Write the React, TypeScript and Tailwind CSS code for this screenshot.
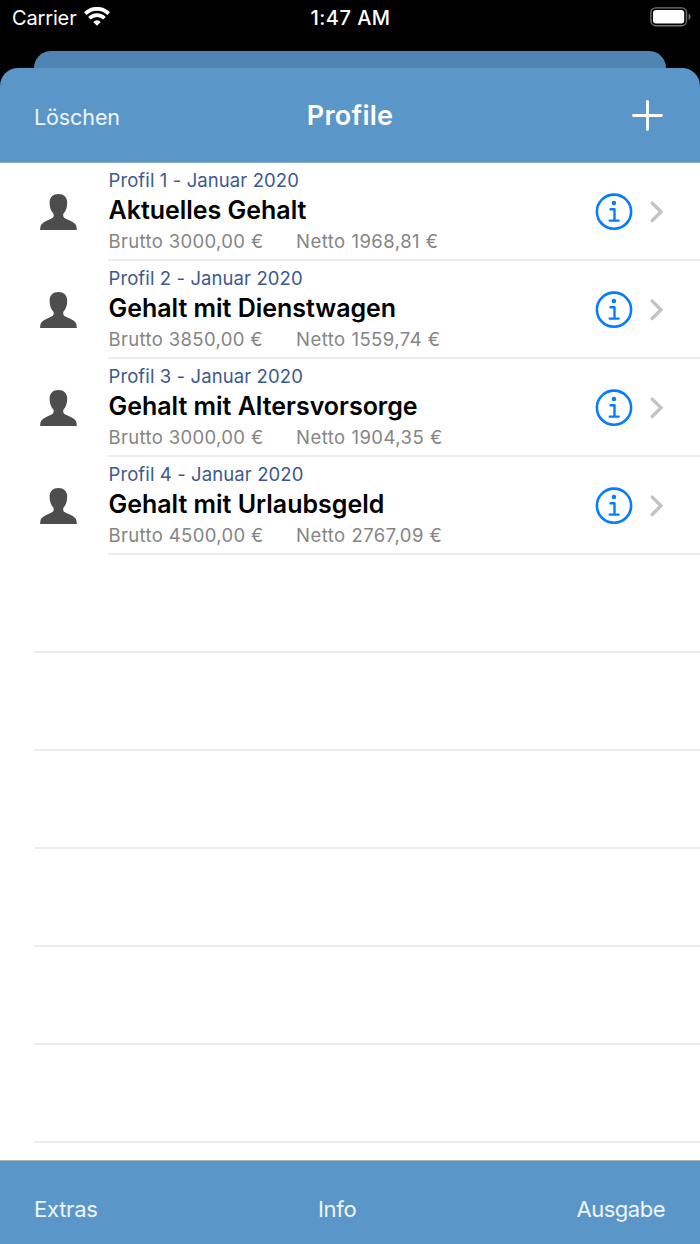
const profiles = [
  { id: 1, date: "Januar 2020", name: "Aktuelles Gehalt", gross: "3000,00 €", net: "1968,81 €" },
  { id: 2, date: "Januar 2020", name: "Gehalt mit Dienstwagen", gross: "3850,00 €", net: "1559,74 €" },
  { id: 3, date: "Januar 2020", name: "Gehalt mit Altersvorsorge", gross: "3000,00 €", net: "1904,35 €" },
  { id: 4, date: "Januar 2020", name: "Gehalt mit Urlaubsgeld", gross: "4500,00 €", net: "2767,09 €" },
];

function WifiIcon() {
  return (
    <svg width="26" height="19" viewBox="0 0 26 19" fill="none" stroke="white">
      <path d="M1.3 6.6a16.6 16.6 0 0 1 23.4 0" strokeWidth="3.8" />
      <path d="M5.5 11.2a10.6 10.6 0 0 1 15 0" strokeWidth="3.6" />
      <path d="M13 18.8l-3.8-3.9a5.4 5.4 0 0 1 7.6 0z" fill="white" stroke="none" />
    </svg>
  );
}

function BatteryIcon() {
  return (
    <svg width="42" height="20" viewBox="0 0 42 20" fill="none">
      <rect x="0.9" y="0.9" width="35.6" height="17.8" rx="4.8" stroke="#747474" strokeWidth="1.4" />
      <rect x="3" y="3" width="31.2" height="13.6" rx="3" fill="white" />
      <path d="M38.6 6.6v6.4c2.6-1 2.6-5.4 0-6.4z" fill="#747474" />
    </svg>
  );
}

function PersonIcon() {
  return (
    <svg width="38" height="38" viewBox="0 0 38 38" fill="#4d4d4d">
      <path d="M19.4 1c5.3 0 8.8 3.3 8.8 8.8 0 4.700-1.300 8.400-3.600 10.800-.7.8-.5 3.300.5 4.100 2.100 1.600 5.500 2.500 8.500 4.200 3.200 1.800 4.200 3.600 4.200 8.100H1.200c0-4.500 1-6.300 4.200-8.100 3-1.700 6.300-2.600 8.400-4.200 1-.8 1.200-3.300.5-4.100-2.300-2.400-3.700-6.100-3.700-10.800C10.600 4.300 14.100 1 19.400 1z" />
    </svg>
  );
}

function InfoIcon() {
  return (
    <svg width="38" height="38" viewBox="0 0 38 38" fill="none" stroke="#087cff">
      <circle cx="19" cy="18.7" r="17.1" strokeWidth="2.6" />
      <circle cx="18.9" cy="10" r="2.3" fill="#087cff" stroke="none" />
      <path d="M15.5 16.2h4v11.3M14.7 27.6h8.9" strokeWidth="2.4" strokeLinecap="round" strokeLinejoin="round" />
    </svg>
  );
}

function Chevron() {
  return (
    <svg width="14" height="22" viewBox="0 0 14 22" fill="none" stroke="#c3c3c5" strokeWidth="3.4">
      <path d="M2.2 2.1L11 10.8l-8.8 8.7" strokeLinecap="round" />
    </svg>
  );
}

function ProfileRow({ profile }: { profile: (typeof profiles)[number] }) {
  return (
    <li className="flex h-[98px] pl-[39px]">
      <div className="w-[69px] shrink-0 pt-[29.5px]">
        <PersonIcon />
      </div>
      <div className="flex flex-1 border-b-2 border-[#ececed]">
        <div className="flex-1 whitespace-nowrap pl-[0.5px] pt-1">
          <p className="text-[18.5px] leading-[26px] tracking-[0.1px] text-[#3d5890]">
            Profil {profile.id} - {profile.date}
          </p>
          <p className="pt-px text-[25px] font-semibold leading-8 tracking-[-0.02px] text-black">{profile.name}</p>
          <div className="-mt-px flex text-[18.5px] leading-8 text-[#858585]">
            <span className="w-[187.5px] tracking-[0.35px]">Brutto {profile.gross}</span>
            <span className="tracking-[0.48px]">Netto {profile.net}</span>
          </div>
        </div>
        <button className="mt-[30px] h-[38px]">
          <InfoIcon />
        </button>
        <div className="ml-[17px] mr-[36px] mt-[38px]">
          <Chevron />
        </div>
      </div>
    </li>
  );
}

export default function App() {
  return (
    <div className="flex h-[1244px] w-[700px] flex-col overflow-hidden bg-black font-['Inter',sans-serif]">
      {/* Status bar */}
      <div className="grid h-[51px] shrink-0 grid-cols-3 text-[20px] leading-9 text-white">
        <div className="flex pl-3">
          <span className="w-[72px] tracking-[-0.15px]">Carrier</span>
          <span className="pt-[7px]">
            <WifiIcon />
          </span>
        </div>
        <span className="pl-px text-center font-medium tracking-[0.5px]">1:47 AM</span>
        <div className="flex justify-end pr-2 pt-[7px]">
          <BatteryIcon />
        </div>
      </div>

      {/* Edge of the sheet behind */}
      <div className="mx-[34px] h-[17px] shrink-0 rounded-t-[17px] bg-[#5085b3]" />

      <header className="grid h-[95px] shrink-0 grid-cols-3 rounded-t-[18px] border-b border-[#89a9c5] bg-[#5b96c8] text-white">
        <button className="mt-[33px] h-8 pl-[34px] text-left text-[21.5px] leading-8 tracking-[-0.1px] text-white/90">
          Löschen
        </button>
        <h1 className="mt-[32px] text-center text-[27px] font-semibold leading-8 tracking-[0.25px]">Profile</h1>
        <button className="mr-[37px] mt-[32px] h-[30px] justify-self-end">
          <svg width="31" height="31" viewBox="0 0 31 31" stroke="white" strokeWidth="2.8" strokeLinecap="round">
            <path d="M15.5 1.5v28M1.5 15.5h28" />
          </svg>
        </button>
      </header>

      <main className="flex-1 overflow-hidden bg-white">
        <ul>
          {profiles.map((p) => (
            <ProfileRow key={p.id} profile={p} />
          ))}
          {[1, 2, 3, 4, 5, 6].map((i) => (
            <li key={i} className="ml-[34px] h-[98px] border-b-2 border-[#ececed]" />
          ))}
        </ul>
      </main>

      <footer className="flex h-[84px] shrink-0 justify-between border-t border-[#a9b4bf] bg-[#5b96c8] pl-[34px] pr-[35px] pt-8 text-[22px] leading-8 text-white/90">
        <button className="h-8 tracking-[-0.25px]">Extras</button>
        <button className="h-8 tracking-[-0.3px]">Info</button>
        <button className="h-8 tracking-[-0.5px]">Ausgabe</button>
      </footer>
    </div>
  );
}
